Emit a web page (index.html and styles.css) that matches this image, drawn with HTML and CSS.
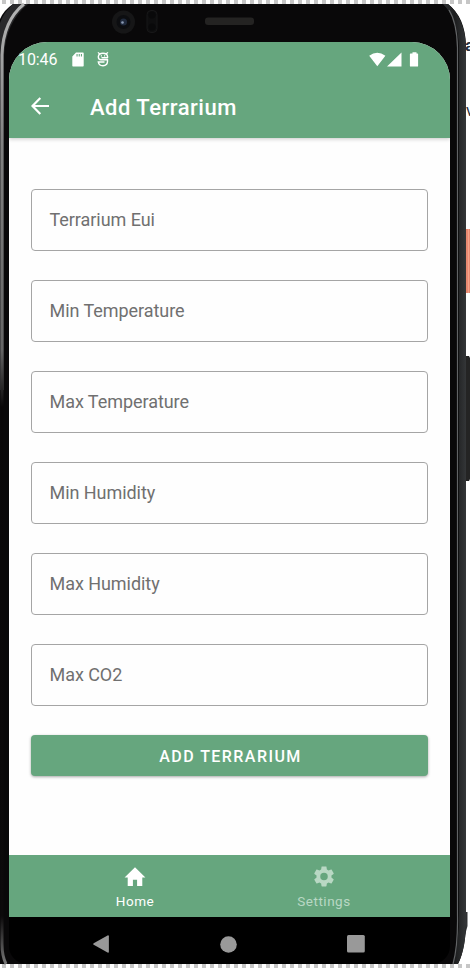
FILE: index.html
```html
<!DOCTYPE html>
<html lang="en">
<head>
<meta charset="utf-8">
<title>Add Terrarium</title>
<link rel="stylesheet" href="styles.css">
</head>
<body>
<div class="device">
  <svg class="frame" width="470" height="968" viewBox="0 0 470 968" aria-hidden="true">
    <defs>
      <linearGradient id="edge" x1="0" y1="0" x2="0" y2="1">
        <stop offset="0" stop-color="#b5b5b5"/><stop offset=".15" stop-color="#808080"/><stop offset=".36" stop-color="#666"/><stop offset=".42" stop-color="#090708"/><stop offset=".95" stop-color="#0c0a0b"/><stop offset="1" stop-color="#777"/>
      </linearGradient>
      <linearGradient id="rail" x1="0" x2="1">
        <stop offset="0" stop-color="#303234"/><stop offset=".5" stop-color="#1c1d1e"/><stop offset="1" stop-color="#343638"/>
      </linearGradient>
    </defs>
    <path d="M466 229h4v64h-4z" fill="#e98a72"/>
    <path d="M468 229h1v64h-1z" fill="#f5a48d"/>
    <path d="M466 356h3l1 2v121l-1 2h-3z" fill="#242424"/>
    <path d="M465 912h2.500v14l-2.500 9z" fill="#333537"/>
    <path d="M0 19Q4 10 13 4H448Q465 17 466 45V912Q467 946 458 964H0z" fill="#090809"/>
    <path d="M0 23Q4 12 13 4H28Q6 22 4 55V390H0z" fill="#29292b"/>
    <path d="M24 4Q3 21 2 55V944Q2 956 6 964" fill="none" stroke="url(#edge)" stroke-width="3"/>
    <path d="M443 4H448Q465 18 466 48V912Q467 946 458 964H453Q459 944 459 912V48Q458 19 443 4z" fill="url(#rail)"/>
    <path d="M449 10Q457 23 457.5 48V915Q458 946 453 964" fill="none" stroke="#626466" stroke-width="1.2"/>
    <circle cx="123.5" cy="22" r="11.5" fill="#161617"/>
    <circle cx="123.5" cy="22" r="7" fill="#0c0d10"/>
    <circle cx="123.5" cy="22" r="3.5" fill="#202a3d"/>
    <circle cx="122.5" cy="22.5" r="1.3" fill="#8b9bb5"/>
    <rect x="147" y="10.5" width="10" height="22" rx="4" fill="#0e0e0f" stroke="#171718"/>
    <circle cx="152" cy="15" r="3.5" fill="#09090a"/><circle cx="152" cy="27" r="3.5" fill="#09090a"/>
    <rect x="205" y="17.5" width="49" height="7.5" rx="3" fill="#242322"/>
  </svg>
  <span class="behind behind-name">a</span>
  <span class="behind behind-mark">v</span>

  <div class="bezel"></div>
  <main class="screen">
    <div class="status">
      <span class="clock">10:46</span>
      <svg class="card-icon" width="12" height="15" viewBox="0 0 12 15"><path fill="#fff" fill-rule="evenodd" d="M4 .5h7q.7 0 .7.7v12.6q0 .7-.7.7H1q-.7 0-.7-.7V4.5zM4.5 2v2.5h1.1V2zm2.2 0v2.5h1.1V2zm2.2 0v2.5H10V2z"/></svg>
      <svg class="bug-icon" width="12" height="15" viewBox="0 0 12 15"><path fill="none" stroke="#fff" stroke-width="1.4" d="M10.9 5.8H4.5M10.6 5.8V4.8Q10.2 1.3 6 1.3 1.7 1.3 1.3 4.8 1.3 7.8 4 7.8H10.5V9.5Q10.3 13.5 6 13.8 1.7 13.5 1.3 10H7.5"/><path fill="#fff" d="M1.3.1l2 1.5-1 .9L.5.8zM10.5.1l-2 1.5 1 .9L11.4.8zM3.8 3.2h1.2v1.2H3.8zM7 3.2h1.2v1.2H7z"/></svg>
      <svg class="signals" width="50" height="15" viewBox="0 0 50 15" fill="#fff"><path d="M8.3 14.3L.2 3.8Q8.3-2.4 16.4 3.8zM32.5.5v14H18zM41.5 1.5h2V.3h4v1.2h1q.6 0 .6.6v11.8q0 .6-.6.6h-7q-.6 0-.6-.6V2.1q0-.6.6-.6z"/></svg>
    </div>
    <header class="appbar">
      <svg width="18" height="18" viewBox="0 0 18 18"><path fill="none" stroke="#fff" stroke-width="2.2" d="M18 9H1.6M9.3.9L1.5 9l7.8 8.1"/></svg>
      <h1>Add Terrarium</h1>
    </header>
    <form class="form">
      <div class="field">Terrarium Eui</div>
      <div class="field">Min Temperature</div>
      <div class="field">Max Temperature</div>
      <div class="field">Min Humidity</div>
      <div class="field">Max Humidity</div>
      <div class="field">Max CO2</div>
      <button class="submit" type="button">ADD TERRARIUM</button>
    </form>
    <nav class="tabs">
      <div class="tab">
        <svg width="26" height="26" viewBox="0 0 24 24"><path fill="#fff" d="M10 21v-6h4v6h5v-8h3L12 3 2 13h3v8z"/></svg>
        <span>Home</span>
      </div>
      <div class="tab muted">
        <svg width="26" height="26" viewBox="0 0 24 24"><path fill="currentColor" d="M19.14 12.94c.04-.3.06-.61.06-.94 0-.32-.02-.64-.07-.94l2.03-1.58c.18-.14.23-.41.12-.61l-1.92-3.32c-.12-.22-.37-.29-.59-.22l-2.39.96c-.5-.38-1.03-.7-1.62-.94L14.4 2.81c-.04-.24-.24-.41-.48-.41h-3.84c-.24 0-.43.17-.47.41l-.36 2.54c-.59.24-1.13.57-1.62.94l-2.39-.96c-.22-.08-.47 0-.59.22L2.74 8.87c-.12.21-.08.47.12.61l2.03 1.58c-.05.3-.09.63-.09.94s.02.64.07.94l-2.03 1.58c-.18.14-.23.41-.12.61l1.92 3.32c.12.22.37.29.59.22l2.39-.96c.5.38 1.03.7 1.62.94l.36 2.54c.05.24.24.41.48.41h3.84c.24 0 .44-.17.47-.41l.36-2.54c.59-.24 1.13-.56 1.62-.94l2.39.96c.22.08.47 0 .59-.22l1.92-3.32c.12-.22.07-.47-.12-.61zM12 15.6A3.6 3.6 0 1 1 12 8.4a3.6 3.6 0 0 1 0 7.2z"/></svg>
        <span>Settings</span>
      </div>
    </nav>
  </main>
  <div class="system">
    <svg width="16" height="18" viewBox="0 0 16 18"><path fill="#999" d="M15 .2q.9 0 .9 1v15.6q0 1-.9.9L.7 9.8q-1-.8 0-1.6z"/></svg>
    <svg width="17" height="17" viewBox="0 0 17 17"><circle cx="8.5" cy="8.5" r="8.3" fill="#999"/></svg>
    <svg width="18" height="18" viewBox="0 0 18 18"><rect width="17.8" height="17.5" rx="1.5" fill="#999"/></svg>
  </div>
  <div class="dashes"></div>
</div>
</body>
</html>
```

FILE: styles.css
```css
* { box-sizing: border-box; }
body { margin: 0; background: #fff; font-family: Roboto, sans-serif; }
.device {
  position: relative;
  display: flex;
  flex-direction: column;
  width: 470px;
  height: 968px;
  overflow: hidden;
  background: #fff;
}
.device::before, .dashes {
  content: "";
  flex: none;
  height: 4px;
  background: repeating-linear-gradient(90deg, #fff 0 2px, #c6c6c6 2px 6px, #fff 6px 8px);
}
.frame { position: absolute; top: 0; left: 0; }
.behind { position: absolute; overflow: hidden; color: #28303e; line-height: 16px; }
.behind-name { left: 465px; top: 37px; width: 5px; font-size: 17px; font-weight: 700; }
.behind-mark { left: 466px; top: 103px; width: 4px; font-size: 16px; }
.bezel { flex: none; height: 37.5px; }
.screen {
  position: relative;
  display: flex;
  flex-direction: column;
  flex: none;
  width: 441px;
  height: 875.5px;
  margin-left: 9px;
  overflow: hidden;
  background: #fefefe;
  border-radius: 38px 38px 0 0;
}
.status {
  position: relative;
  z-index: 1;
  display: flex;
  align-items: center;
  flex: none;
  height: 35.5px;
  padding: 1px 31px 0 9px;
  background: #66a67e;
  color: #fff;
}
.clock { width: 40px; font-size: 16px; letter-spacing: -.1px; white-space: nowrap; }
.card-icon { margin-left: 14px; }
.bug-icon { margin-left: 13px; }
.signals { margin-left: auto; }
.appbar {
  position: relative;
  display: flex;
  align-items: center;
  flex: none;
  height: 60.5px;
  padding: 0 22px;
  background: #66a67e;
  color: #fff;
  box-shadow: 0 1px 4px rgba(0, 0, 0, .22);
}
.appbar svg { margin-top: -3px; }
.appbar h1 { margin: 1px 0 0 41px; font-size: 22px; font-weight: 500; letter-spacing: .5px; }
.form {
  display: flex;
  flex: 1;
  flex-direction: column;
  gap: 29px;
  padding: 51.5px 22px 0;
}
.field {
  display: flex;
  align-items: center;
  flex: none;
  height: 62px;
  padding: 0 0 1px 17.5px;
  border: 1px solid #a5a5a5;
  border-radius: 4px;
  color: #707070;
  font-size: 18px;
  letter-spacing: -.05px;
}
.submit {
  flex: none;
  height: 41px;
  padding: 2px 0 0 2px;
  border: 0;
  border-radius: 4px;
  background: #66a67e;
  box-shadow: 0 1px 3px rgba(0, 0, 0, .35);
  color: #fff;
  font: 500 16px Roboto, sans-serif;
  letter-spacing: 1.45px;
}
.tabs {
  display: flex;
  justify-content: center;
  flex: none;
  height: 62.5px;
  background: #66a67e;
}
.tab {
  display: flex;
  align-items: center;
  flex-direction: column;
  width: 189px;
  padding-top: 9.5px;
  color: #fff;
  font-size: 13.5px;
  letter-spacing: .5px;
}
.tab svg { height: 25px; }
.tab span { margin-top: 2.5px; line-height: 18px; }
.muted { color: #b9d8c4; }
.system {
  position: relative;
  display: flex;
  align-items: center;
  flex: 1;
  gap: 110.5px;
  width: 441px;
  margin-left: 9px;
  padding: 7px 0 0 84px;
  background: #000;
  border-radius: 0 0 18px 18px;
}
```
